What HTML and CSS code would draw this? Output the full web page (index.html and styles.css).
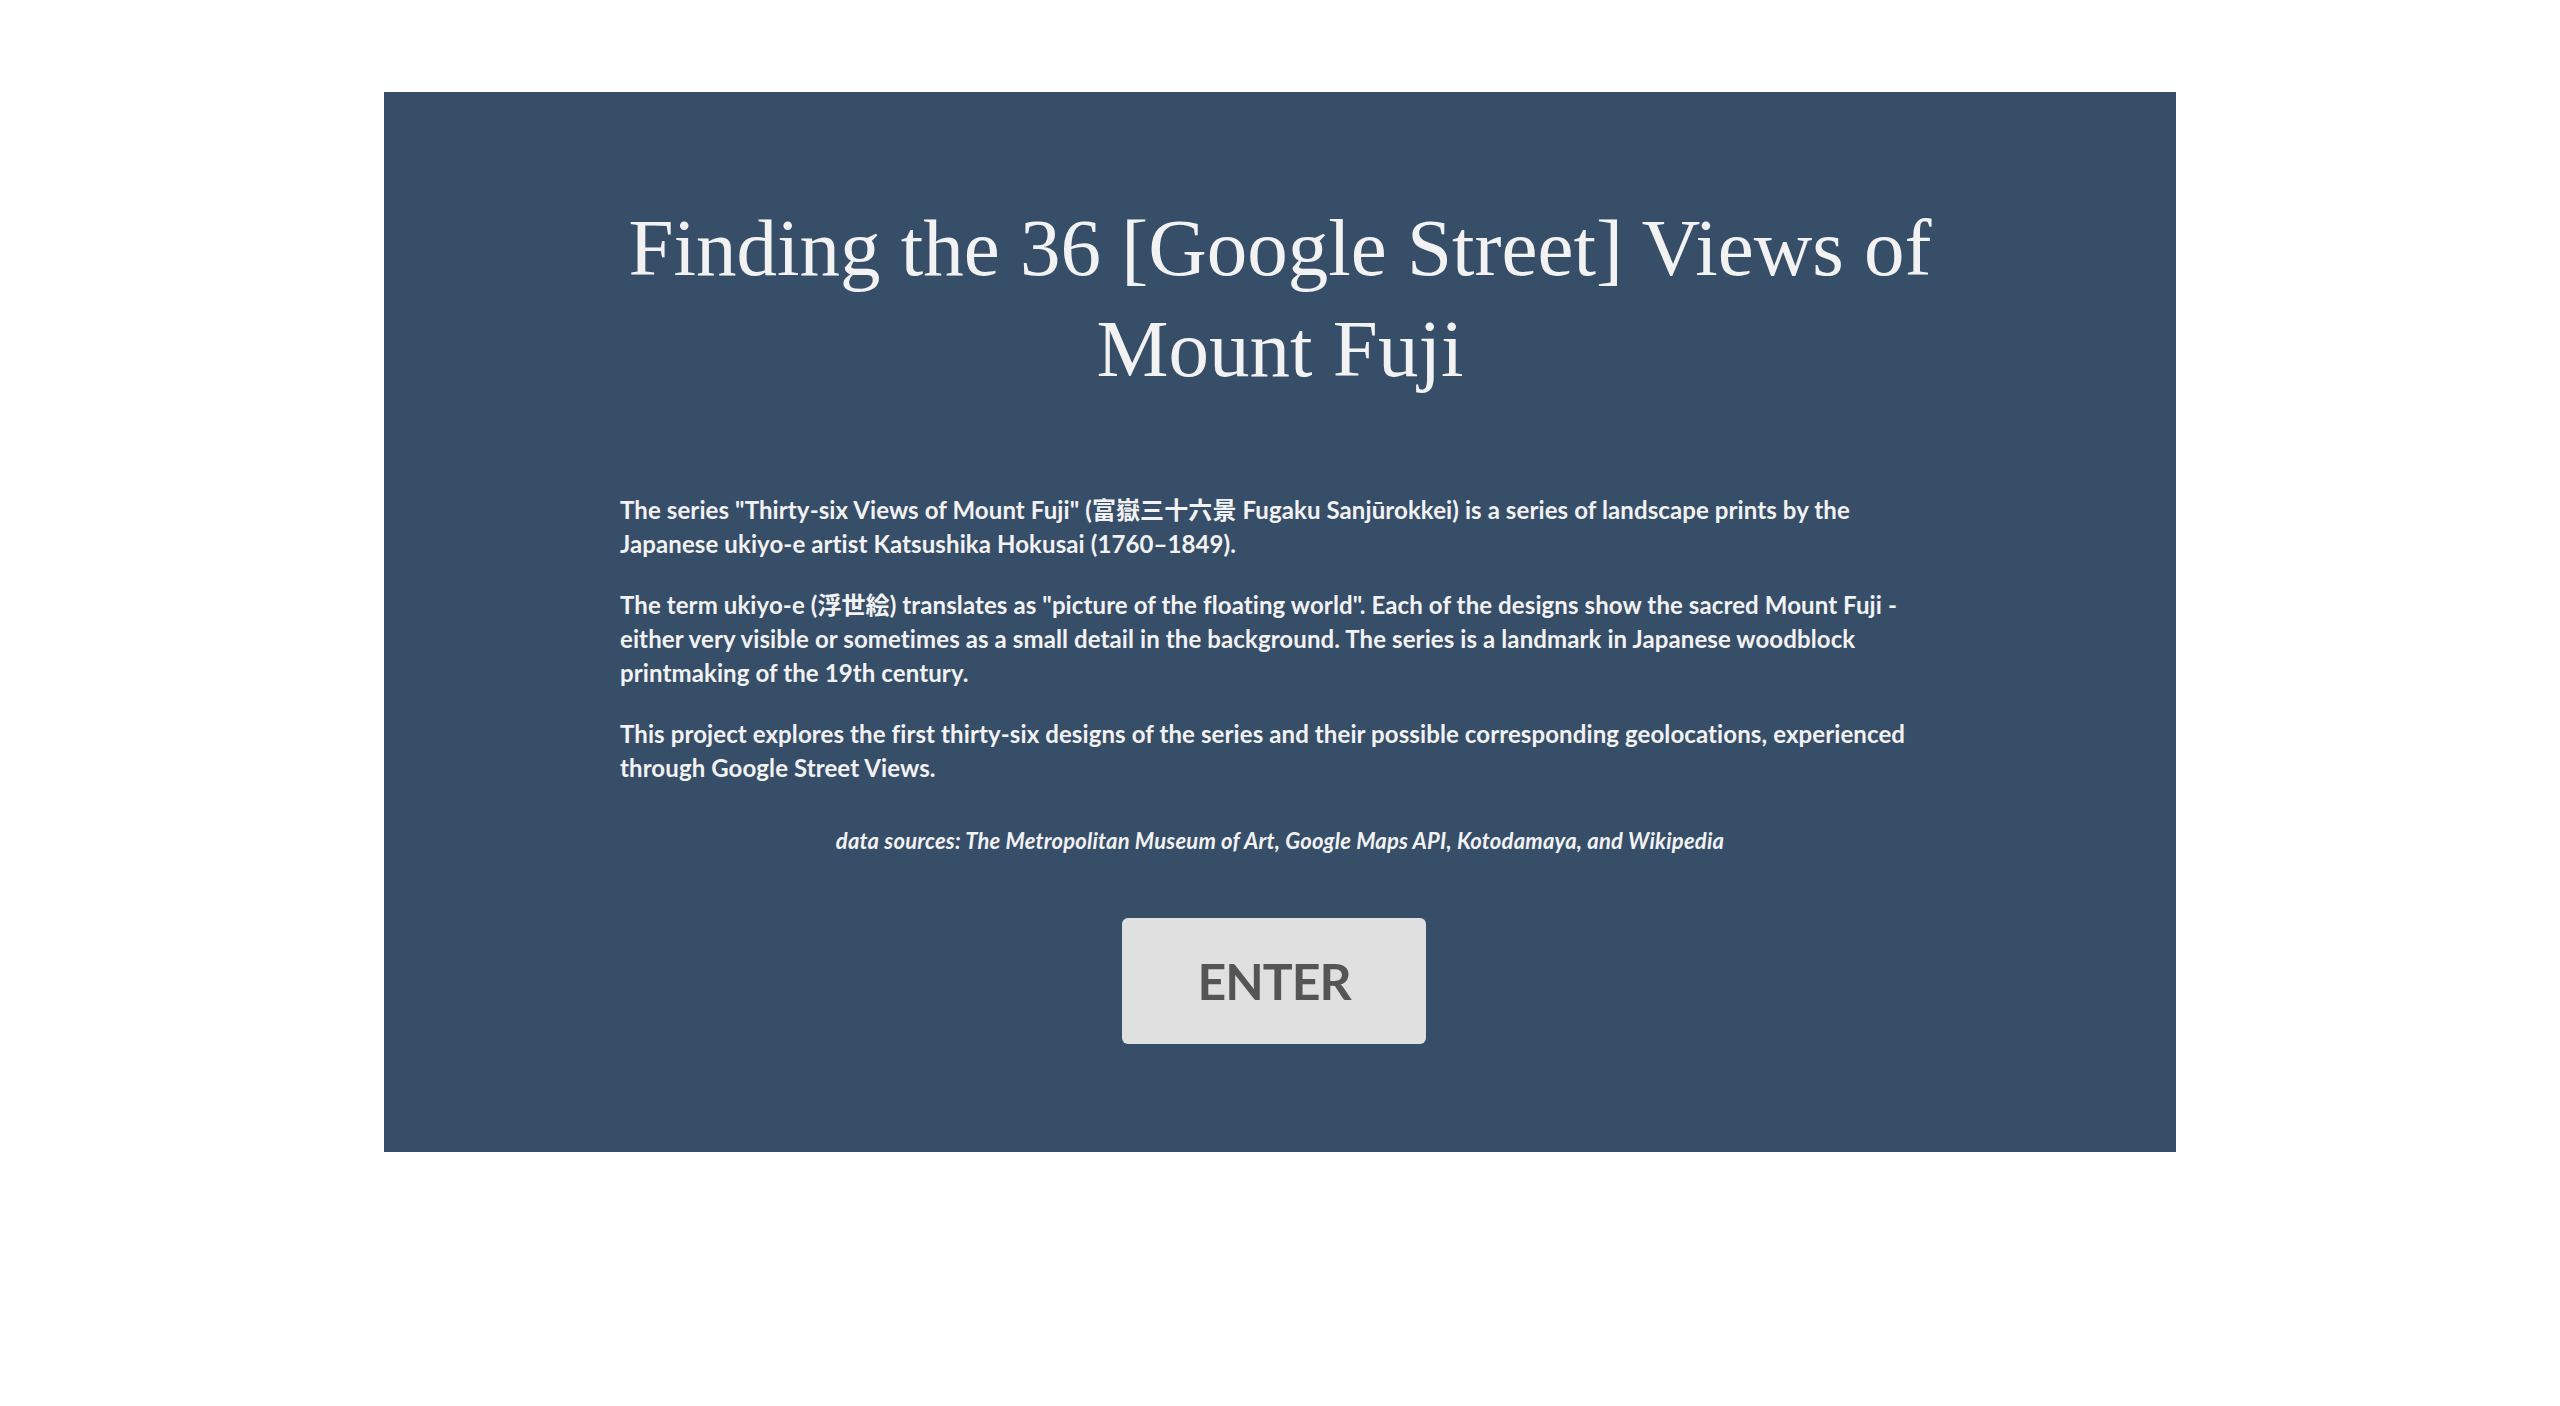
FILE: index.html
```html
<!DOCTYPE html>
<html lang="en">
<head>
<meta charset="utf-8">
<title>Finding the 36 [Google Street] Views of Mount Fuji</title>
<link rel="stylesheet" href="styles.css">
</head>
<body>
<main class="panel">
  <div class="content">
    <h1 class="title">Finding the 36 [Google Street] Views of Mount Fuji</h1>
    <div class="intro-group">
      <p class="intro">The series "Thirty-six Views of Mount Fuji" (富嶽三十六景 Fugaku Sanjūrokkei) is a series of landscape prints by the Japanese ukiyo-e artist Katsushika Hokusai (1760–1849).</p>
      <p class="intro">The term ukiyo-e (浮世絵) translates as "picture of the floating world". Each of the designs show the sacred Mount Fuji - either very visible or sometimes as a small detail in the background. The series is a landmark in Japanese woodblock printmaking of the 19th century.</p>
      <p class="intro">This project explores the first thirty-six designs of the series and their possible corresponding geolocations, experienced through Google Street Views.</p>
    </div>
    <p class="sources">data sources: The Metropolitan Museum of Art, Google Maps API, Kotodamaya, and Wikipedia</p>
    <div class="actions">
      <button class="enter" type="button">ENTER</button>
    </div>
  </div>
</main>
</body>
</html>
```

FILE: styles.css
```css
html, body {
  margin: 0;
  padding: 0;
  background: #ffffff;
}

.panel {
  width: 70%;
  margin: 92px auto 0;
  background: #374e69;
  padding: 106px 0 108px;
  box-sizing: border-box;
}

.content {
  width: 1320px;
  margin: 0 auto;
  display: flex;
  flex-direction: column;
}

.title {
  margin: 0 0 93px;
  font-family: "Liberation Serif", "Times New Roman", serif;
  font-weight: 400;
  font-size: 81px;
  line-height: 101px;
  color: #f2f2f2;
  text-align: center;
}

.intro-group {
  display: flex;
  flex-direction: column;
  gap: 27px;
}

.intro {
  margin: 0;
  font-family: Lato, "Noto Sans CJK JP", sans-serif;
  font-weight: 700;
  font-size: 24px;
  line-height: 34px;
  letter-spacing: 0.1px;
  color: #f2f2f2;
}

.sources {
  margin: 41px 0 0;
  font-family: Lato, sans-serif;
  font-style: italic;
  font-weight: 700;
  font-size: 22px;
  line-height: 30px;
  letter-spacing: 0.2px;
  color: #f2f2f2;
  text-align: center;
}

.actions {
  display: flex;
  justify-content: center;
  margin-top: 62px;
  padding-right: 12px;
}

.enter {
  box-sizing: border-box;
  width: 304px;
  height: 126px;
  padding: 0;
  font-family: Lato, sans-serif;
  font-weight: 700;
  font-size: 50px;
  line-height: 60px;
  letter-spacing: -1px;
  color: #555555;
  background: #e0e0e0;
  border: none;
  border-radius: 6px;
  text-align: center;
  cursor: pointer;
}
```
